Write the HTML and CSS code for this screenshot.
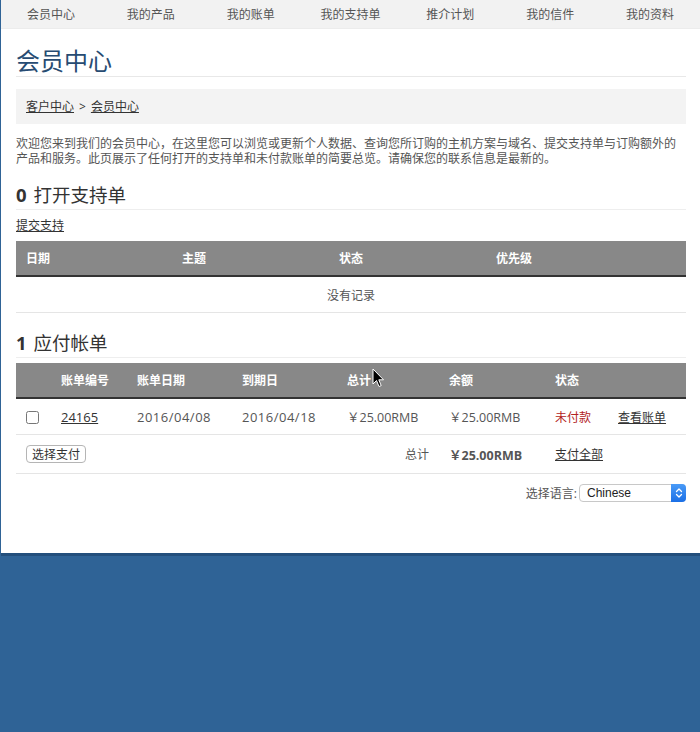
FILE: index.html
```html
<!DOCTYPE html>
<html lang="zh-CN">
<head>
<meta charset="utf-8">
<title>会员中心</title>
<link rel="stylesheet" href="styles.css">
</head>
<body>
<div class="page">
  <nav class="topnav">
    <a class="nav-item" href="#">会员中心</a>
    <a class="nav-item" href="#">我的产品</a>
    <a class="nav-item" href="#">我的账单</a>
    <a class="nav-item" href="#">我的支持单</a>
    <a class="nav-item" href="#">推介计划</a>
    <a class="nav-item" href="#">我的信件</a>
    <a class="nav-item" href="#">我的资料</a>
  </nav>
  <main class="content">
    <h1 class="page-title">会员中心</h1>
    <div class="breadcrumb"><a href="#">客户中心</a><span class="sep">&gt;</span><a href="#">会员中心</a></div>
    <p class="intro">欢迎您来到我们的会员中心，在这里您可以浏览或更新个人数据、查询您所订购的主机方案与域名、提交支持单与订购额外的<br>产品和服务。此页展示了任何打开的支持单和未付款账单的简要总览。请确保您的联系信息是最新的。</p>

    <h2 class="section-title"><b>0</b> 打开支持单</h2>
    <div class="section-link"><a href="#">提交支持</a></div>
    <table class="data tickets">
      <colgroup><col class="t-c1"><col class="t-c2"><col class="t-c3"><col class="t-c4"></colgroup>
      <thead><tr><th>日期</th><th>主题</th><th>状态</th><th>优先级</th></tr></thead>
      <tbody><tr><td colspan="4" class="empty">没有记录</td></tr></tbody>
    </table>

    <h2 class="section-title second"><b>1</b> 应付帐单</h2>
    <table class="data invoices">
      <colgroup><col class="i-c1"><col class="i-c2"><col class="i-c3"><col class="i-c4"><col class="i-c5"><col class="i-c6"><col class="i-c7"><col class="i-c8"></colgroup>
      <thead><tr><th></th><th>账单编号</th><th>账单日期</th><th>到期日</th><th>总计</th><th>余额</th><th>状态</th><th></th></tr></thead>
      <tbody>
        <tr class="inv-row">
          <td><input type="checkbox" class="check"></td>
          <td><a href="#" class="num">24165</a></td>
          <td class="num date">2016/04/08</td>
          <td class="num date">2016/04/18</td>
          <td class="num money">￥25.00RMB</td>
          <td class="num money">￥25.00RMB</td>
          <td class="unpaid">未付款</td>
          <td><a href="#">查看账单</a></td>
        </tr>
        <tr class="foot-row">
          <td colspan="5"><div class="foot-left"><button class="btn">选择支付</button><span class="total-label">总计</span></div></td>
          <td class="num money total">￥25.00RMB</td>
          <td colspan="2"><a href="#">支付全部</a></td>
        </tr>
      </tbody>
    </table>

    <div class="lang">
      <label class="lang-label" for="lang">选择语言:</label>
      <span class="select-wrap">
        <select id="lang" class="lang-select"><option>Chinese</option></select>
        <span class="select-arrow"><svg width="8" height="12" viewBox="0 0 8 12"><path d="M1.5 4.5 L4 2 L6.5 4.5 M1.5 7.5 L4 10 L6.5 7.5" fill="none" stroke="#fff" stroke-width="1.3" stroke-linecap="round" stroke-linejoin="round"/></svg></span>
      </span>
    </div>
  </main>
  <svg class="cursor" width="13" height="20" viewBox="0 0 13 20"><path d="M1 1 L1 16 L4.5 12.5 L7 18.5 L9.2 17.6 L6.8 11.8 L11.5 11.8 Z" fill="#000" stroke="#fff" stroke-width="1"/></svg>
</div>
</body>
</html>
```
FILE: styles.css
```css
html, body {
  margin: 0;
  padding: 0;
}
body {
  background: #2f6396;
  font-family: "Open Sans", "Noto Sans CJK SC", sans-serif;
  font-size: 12px;
  color: #555;
  height: 732px;
  overflow: hidden;
}
.page {
  position: relative;
  margin-left: 1px;
  background: #fff;
  height: 553px;
  border-bottom: 3px solid #234f7c;
}
.topnav {
  display: flex;
  height: 29px;
  background: #f2f2f2;
  border-bottom: 1px solid #ececec;
  box-sizing: border-box;
}
.nav-item {
  width: 100px;
  text-align: center;
  line-height: 29px;
  color: #555;
  text-decoration: none;
  font-size: 12px;
}
.content {
  padding: 0 14px 0 15px;
}
a {
  color: #333;
  text-decoration: underline;
}
.page-title {
  margin: 17px 0 0;
  font-size: 24px;
  font-weight: normal;
  line-height: 30px;
  color: #274b72;
  border-bottom: 1px solid #e8e8e8;
}
.breadcrumb {
  margin-top: 12px;
  height: 35px;
  line-height: 35px;
  background: #f3f3f3;
  padding: 0 10px;
  color: #333;
}
.sep {
  margin: 0 5px;
}
.intro {
  margin: 12px 0 0;
  line-height: 15px;
  color: #555;
}
.section-title {
  margin: 18px 0 0;
  font-size: 18.5px;
  font-weight: normal;
  line-height: 22px;
  padding-bottom: 3px;
  color: #333;
  border-bottom: 1px solid #eee;
}
.section-title b {
  font-weight: bold;
  margin-right: 2px;
}
.section-title.second {
  margin-top: 19px;
}
.section-link {
  margin-top: 8px;
  line-height: 16px;
}
.data {
  width: 100%;
  border-collapse: collapse;
  table-layout: fixed;
}
.tickets {
  margin-top: 7px;
}
.invoices {
  margin-top: 5px;
}
.data th {
  background: #888;
  color: #fff;
  font-weight: bold;
  text-align: left;
  height: 34px;
  padding: 0 10px;
  border-bottom: 2px solid #333;
}
.data td {
  padding: 0 10px;
  border-bottom: 1px solid #e5e5e5;
  color: #555;
}
.t-c1 { width: 156px; }
.t-c2 { width: 157px; }
.t-c3 { width: 157px; }
.empty {
  text-align: center;
  height: 35px;
}
.i-c1 { width: 35px; }
.i-c2 { width: 76px; }
.i-c3 { width: 105px; }
.i-c4 { width: 105px; }
.i-c5 { width: 102px; }
.i-c6 { width: 106px; }
.i-c7 { width: 63px; }
.inv-row td {
  height: 35px;
  white-space: nowrap;
}
.num {
  font-family: "Open Sans", "Noto Sans CJK SC", sans-serif;
  font-size: 13px;
}
.date {
  letter-spacing: 0.5px;
}
a.num {
  color: #333;
}
.money {
  font-size: 12.5px;
}
.check {
  margin: 0;
  width: 13px;
  height: 13px;
  vertical-align: middle;
}
.unpaid {
  color: #b22222 !important;
}
.foot-row td {
  height: 38px;
}
.foot-left {
  display: flex;
  justify-content: space-between;
  align-items: center;
}
.btn {
  font-family: "Noto Sans CJK SC", sans-serif;
  font-size: 12px;
  height: 18px;
  line-height: 14px;
  padding: 0 5px;
  background: #fff;
  border: 1px solid #b5b5b5;
  border-radius: 4px;
  color: #333;
}
.total-label {
  color: #555;
}
.total {
  font-weight: bold;
}
.lang {
  display: flex;
  justify-content: flex-end;
  align-items: center;
  margin-top: 10px;
  gap: 2px;
}
.lang-label {
  color: #555;
}
.select-wrap {
  position: relative;
  display: inline-block;
}
.lang-select {
  appearance: none;
  -webkit-appearance: none;
  width: 107px;
  height: 18px;
  border: 1px solid #c8c8c8;
  border-radius: 4px;
  background: #fff;
  font-family: "Liberation Sans", sans-serif;
  font-size: 12px;
  padding: 0 0 0 7px;
  color: #222;
  display: block;
}
.select-arrow {
  position: absolute;
  right: 0;
  top: 0;
  width: 15px;
  height: 18px;
  background: linear-gradient(#4a9bf7, #1a6fe6);
  border-radius: 0 4px 4px 0;
  display: flex;
  align-items: center;
  justify-content: center;
}
.cursor {
  position: absolute;
  left: 371px;
  top: 368px;
}
```
